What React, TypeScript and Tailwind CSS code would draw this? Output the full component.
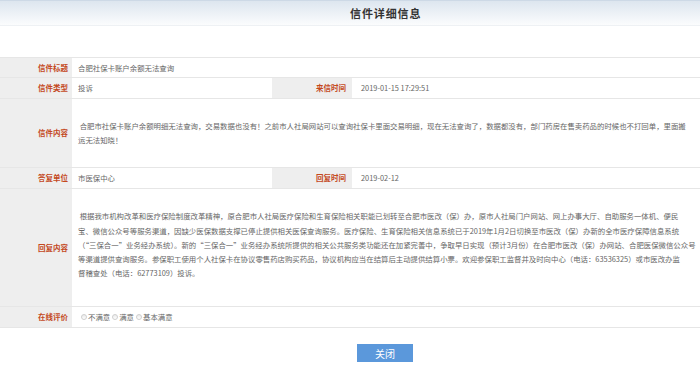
import React from "react";

const Label = ({ children, className = "" }: { children: React.ReactNode; className?: string }) => (
  <div
    className={`w-[72px] shrink-0 bg-[#eeeeee] flex items-center justify-end pr-[4px] text-[7.5px] font-bold text-[#c4491d] whitespace-nowrap ${className}`}
  >
    {children}
  </div>
);

function Radio({ label }: { label: string }) {
  return (
    <label className="flex items-center mr-[2px]">
      <span className="w-[6px] h-[6px] rounded-full border border-[#cfcfcf] bg-linear-to-b from-[#e9e9e9] to-white mr-[1px]" />
      <span>{label}</span>
    </label>
  );
}

export default function App() {
  const reply = [
    "\u00a0根据我市机构改革和医疗保险制度改革精神，原合肥市人社局医疗保险和生育保险相关职能已划转至合肥市医改（保）办，原市人社局门户网站、网上办事大厅、自助服务一体机、便民",
    "宝、微信公众号等服务渠道，因缺少医保数据支撑已停止提供相关医保查询服务。医疗保险、生育保险相关信息系统已于2019年1月2日切换至市医改（保）办新的全市医疗保障信息系统",
    "（“三保合一”业务经办系统）。新的“三保合一”业务经办系统所提供的相关公共服务类功能还在加紧完善中，争取早日实现（预计3月份）在合肥市医改（保）办网站、合肥医保微信公众号",
    "等渠道提供查询服务。参保职工使用个人社保卡在协议零售药店购买药品，协议机构应当在结算后主动提供结算小票。欢迎参保职工监督并及时向中心（电话：63536325）或市医改办监",
    "督稽查处（电话：62773109）投诉。",
  ];
  const content = [
    "\u00a0合肥市社保卡账户余额明细无法查询，交易数据也没有！之前市人社局网站可以查询社保卡里面交易明细，现在无法查询了，数据都没有，部门药房在售卖药品的时候也不打回单，里面搬",
    "运无法知晓！",
  ];
  return (
    <div className="w-[700px] h-[369px] overflow-hidden bg-white text-[#666666] font-['Noto_Sans_CJK_SC',sans-serif]">
      {/* header */}
      <div className="h-[26px] border-t border-[#cdd9e6] border-b border-b-[#eef1f4] bg-linear-to-b from-[#dde6ef] to-[#fbfcfd] flex items-center pl-[350px]">
        <span className="text-[11px] font-bold tracking-[0.9px] text-[#333333]">信件详细信息</span>
      </div>

      <div className="h-[31px]" />

      {/* table */}
      <div className="border-t border-[#e6e6e6] text-[7.4px]">
        <div className="flex h-[20px] border-b border-[#e6e6e6]">
          <Label>信件标题</Label>
          <div className="flex items-center pl-[6px]">合肥社保卡账户余额无法查询</div>
        </div>
        <div className="flex h-[21px] border-b border-[#e6e6e6]">
          <Label>信件类型</Label>
          <div className="w-[200px] flex items-center pl-[6px]">投诉</div>
          <Label className="w-[80px] pr-[6px]">来信时间</Label>
          <div className="flex items-center pl-[9px]">2019-01-15 17:29:51</div>
        </div>
        <div className="flex h-[69px] border-b border-[#e6e6e6]">
          <Label>信件内容</Label>
          <div className="flex flex-col justify-center pl-[6px] leading-[14.5px] whitespace-nowrap">
            {content.map((l, i) => (
              <div key={i}>{l}</div>
            ))}
          </div>
        </div>
        <div className="flex h-[21px] border-b border-[#e6e6e6]">
          <Label>答复单位</Label>
          <div className="w-[200px] flex items-center pl-[6px]">市医保中心</div>
          <Label className="w-[80px] pr-[6px]">回复时间</Label>
          <div className="flex items-center pl-[9px]">2019-02-12</div>
        </div>
        <div className="flex h-[118px] border-b border-[#e6e6e6]">
          <Label>回复内容</Label>
          <div className="flex flex-col justify-center pl-[6px] pb-[5px] leading-[14.3px] whitespace-nowrap">
            {reply.map((l, i) => (
              <div key={i}>{l}</div>
            ))}
          </div>
        </div>
        <div className="flex h-[21px] border-b border-[#e6e6e6]">
          <Label>在线评价</Label>
          <div className="flex items-center pl-[9px]">
            <Radio label="不满意" />
            <Radio label="满意" />
            <Radio label="基本满意" />
          </div>
        </div>
      </div>

      <div className="flex pt-[16px] pl-[357px]">
        <button className="w-[56px] h-[18px] bg-[#5b98db] text-white text-[10px] flex items-center justify-center">
          关闭
        </button>
      </div>
    </div>
  );
}
